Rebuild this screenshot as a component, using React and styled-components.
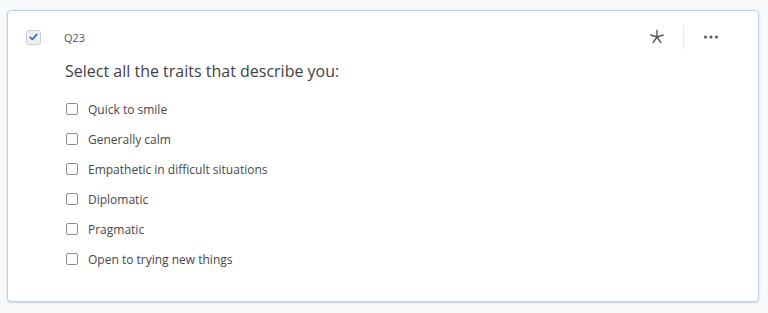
import React from "react";
import styled, { createGlobalStyle } from "styled-components";

const GlobalStyle = createGlobalStyle`
	html, body {
		margin: 0;
		padding: 0;
		background: #f8f9fb;
		font-family: "Open Sans", "Liberation Sans", sans-serif;
	}
`;

const Page = styled.div`
	width: 768px;
	height: 313px;
	padding: 10px 9px 11px 7px;
	box-sizing: border-box;
`;

const Card = styled.section`
	height: 100%;
	box-sizing: border-box;
	background: #fff;
	border: 1.5px solid #b9d0e6;
	border-radius: 4px;
	box-shadow: 0 1px 2px rgba(120, 150, 180, 0.35);
	padding: 17px 0 0 18px;
`;

const Header = styled.div`
	display: flex;
	align-items: center;
	height: 18px;
	padding-right: 36px;
`;

const SelectBox = styled.div`
	width: 15px;
	height: 15px;
	box-sizing: border-box;
	border: 1px solid #c9ccd2;
	border-radius: 3px;
	background: #eef0f3;
	display: flex;
	align-items: center;
	justify-content: center;
	margin-right: 23px;
`;

const QNumber = styled.span`
	font-size: 11px;
	color: #555;
	flex: 1;
`;

const Tools = styled.div`
	display: flex;
	align-items: center;
`;

const ToolIcon = styled.div`
	width: 22px;
	display: flex;
	justify-content: center;
	color: #555;
`;

const Divider = styled.div`
	width: 1px;
	height: 24px;
	background: #e6e8eb;
	margin: 0 16px 0 15px;
`;

const Body = styled.div`
	padding-left: 39px;
`;

const Title = styled.h2`
	margin: 15px 0 13px;
	font-size: 16px;
	font-weight: 400;
	color: #424242;
	line-height: 20px;
`;

const Options = styled.ul`
	list-style: none;
	margin: 0;
	padding: 0 0 0 1px;
`;

const Option = styled.li`
	display: flex;
	align-items: center;
	height: 30px;
	font-size: 12px;
	color: #474747;
`;

const Box = styled.span`
	width: 12px;
	height: 12px;
	box-sizing: border-box;
	border: 1px solid #8a8d92;
	border-radius: 2px;
	margin-right: 10px;
`;

const traits = [
	"Quick to smile",
	"Generally calm",
	"Empathetic in difficult situations",
	"Diplomatic",
	"Pragmatic",
	"Open to trying new things",
];

export default function App() {
	return (
		<Page>
			<GlobalStyle />
			<Card>
				<Header>
					<SelectBox>
						<svg width="9" height="8" viewBox="0 0 9 8">
							<path d="M1.2 4.4 L3.4 6.4 L7.8 1.4" fill="none" stroke="#2b6cc4" strokeWidth="1.6" strokeLinecap="round" strokeLinejoin="round" />
						</svg>
					</SelectBox>
					<QNumber>Q23</QNumber>
					<Tools>
						<ToolIcon>
							<svg width="16" height="16" viewBox="0 0 16 16">
								<g stroke="#555" strokeWidth="1.4" strokeLinecap="round">
									<line x1="8" y1="1.5" x2="8" y2="8" />
									<line x1="8" y1="8" x2="1.8" y2="6" />
									<line x1="8" y1="8" x2="14.2" y2="6" />
									<line x1="8" y1="8" x2="4.2" y2="13.5" />
									<line x1="8" y1="8" x2="11.8" y2="13.5" />
								</g>
							</svg>
						</ToolIcon>
						<Divider />
						<ToolIcon>
							<svg width="16" height="4" viewBox="0 0 16 4">
								<circle cx="2.5" cy="2" r="1.5" fill="#555" />
								<circle cx="8" cy="2" r="1.5" fill="#555" />
								<circle cx="13.5" cy="2" r="1.5" fill="#555" />
							</svg>
						</ToolIcon>
					</Tools>
				</Header>
				<Body>
					<Title>Select all the traits that describe you:</Title>
					<Options>
						{traits.map(t => (
							<Option key={t}>
								<Box />
								{t}
							</Option>
						))}
					</Options>
				</Body>
			</Card>
		</Page>
	);
}
